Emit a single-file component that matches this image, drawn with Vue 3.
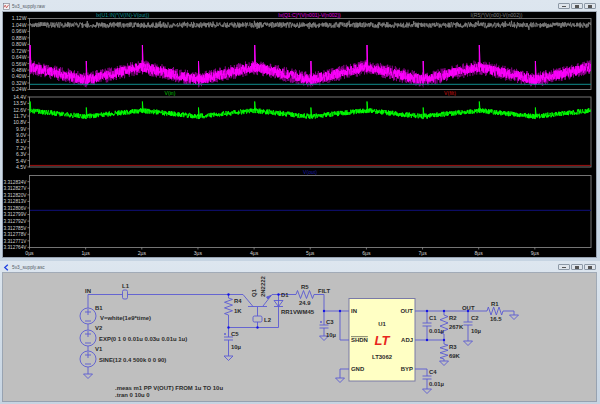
<template>
  <div class="desktop">
    <!-- waveform window -->
    <section class="window plot-window">
      <header class="titlebar">
        <svg class="doc-icon" viewBox="0 0 8 8">
          <rect x="0.5" y="0.5" width="7" height="7" fill="#f4f4f4" stroke="#7a7a8a" stroke-width="0.7" />
          <path d="M1 5 L2.5 2.5 L4 5.5 L6.5 2" fill="none" stroke="#c03030" stroke-width="0.8" />
        </svg>
        <span class="title">5v3_supply.raw</span>
        <div class="win-buttons">
          <span class="win-btn"><i class="min"></i></span>
          <span class="win-btn"><i class="res"></i></span>
          <span class="win-btn"><i class="res"></i></span>
        </div>
      </header>
      <svg class="canvas black" viewBox="3 12 593 245">
        <g v-for="p in panes" :key="p.top">
          <rect class="frame" :x="plotLeft" :y="p.top" :width="plotRight - plotLeft" :height="p.bottom - p.top" />
          <g v-for="t in p.ticks" :key="t.label">
            <line class="tick" :x1="plotLeft - 2" :x2="plotLeft" :y1="t.y" :y2="t.y" />
            <text class="axis" :class="p.cls" :x="plotLeft - 3" :y="t.y + 1.9" text-anchor="end">{{ t.label }}</text>
          </g>
        </g>
        <g v-for="t in timeTicks" :key="t.label">
          <line class="tick" :x1="t.x" :x2="t.x" y1="247.5" y2="249.5" />
          <text class="axis" :x="t.x" y="255" text-anchor="middle">{{ t.label }}</text>
        </g>

        <text class="trace-name teal" x="122.5" y="16.8" text-anchor="middle">Ix(U1:IN)*(V(IN)-V(out))</text>
        <text class="trace-name pink" x="309.5" y="16.8" text-anchor="middle">Ix(Q1:C)*(V(n001)-V(n002))</text>
        <text class="trace-name gray" x="496.5" y="16.8" text-anchor="middle">I(R5)*(V(n00)-V(n002))</text>
        <text class="trace-name green" x="170" y="95" text-anchor="middle">V(in)</text>
        <text class="trace-name red" x="450" y="95" text-anchor="middle">V(filt)</text>
        <text class="trace-name blue" x="310" y="173.6" text-anchor="middle">V(out)</text>

        <path class="trace" stroke="#7c7c7c" :d="grayTrace" />
        <path class="trace thin" stroke="#b400b4" :d="pinkHalo" />
        <path class="trace" stroke="#ff00ff" :d="pinkTrace" />
        <path class="trace flat" stroke="#0f8c8c" d="M30 84.3H591" />
        <path class="trace" stroke="#00ff00" :d="greenTrace" />
        <path class="trace flat" stroke="#a01010" d="M30 165.4H591" />
        <path class="trace flat" stroke="#10107c" d="M30 210.3H591" />
      </svg>
    </section>

    <!-- schematic window -->
    <section class="window sch-window">
      <header class="titlebar">
        <svg class="doc-icon" viewBox="0 0 8 8">
          <path d="M5.5 0.8 L2 4 L5.5 7.2" fill="none" stroke="#2040e0" stroke-width="1.5" />
        </svg>
        <span class="title">5v3_supply.asc</span>
        <div class="win-buttons">
          <span class="win-btn"><i class="min"></i></span>
          <span class="win-btn"><i class="res"></i></span>
          <span class="win-btn"><i class="res"></i></span>
        </div>
      </header>
      <svg class="canvas gray-bg" viewBox="3 272 593 128">
        <rect class="chip" x="349" y="297.5" width="66" height="82.5" />
        <path class="wire" :d="wires" />
        <path class="wire" :d="parts" />
        <path class="wire arrow" d="M268 298 L271 294.5 L266.5 296 Z" />
        <rect class="coil" x="122.5" y="289" width="5" height="9" rx="1.5" />
        <rect class="coil" x="253" y="315" width="9" height="6" rx="1.5" />
        <circle v-for="y in [315, 337, 358]" :key="y" class="wire" cx="88" :cy="y" r="8" />
        <circle v-for="j in junctions" :key="j.join()" class="dot" :cx="j[0]" :cy="j[1]" r="1.2" />
        <text v-for="l in labels" :key="l.t + l.x" class="label" :x="l.x" :y="l.y">{{ l.t }}</text>
        <text class="label" x="351" y="340.5" text-decoration="overline">SHDN</text>
        <text class="label" x="413" y="312" text-anchor="end">OUT</text>
        <text class="label" x="413" y="341" text-anchor="end">ADJ</text>
        <text class="label" x="413" y="370" text-anchor="end">BYP</text>
        <text class="label" x="382" y="325" text-anchor="middle">U1</text>
        <text class="label" x="382" y="358" text-anchor="middle">LT3062</text>
        <text class="logo" x="382" y="343.5" text-anchor="middle">LT</text>
        <text class="label" transform="translate(256 296) rotate(-90)">Q1</text>
        <text class="label" transform="translate(265 296) rotate(-90)">2N2222</text>
      </svg>
    </section>
  </div>
</template>

<script setup>
const plotLeft = 29.5
const plotRight = 591
const usPx = 56.15

const makeTicks = (labels, first, step) =>
  labels.map((label, i) => ({ label, y: first + i * step }))

const panes = [
  {
    top: 18.5,
    bottom: 89.5,
    cls: '',
    ticks: makeTicks(
      ['1.12W', '1.04W', '0.96W', '0.88W', '0.80W', '0.72W', '0.64W', '0.56W', '0.48W', '0.40W', '0.32W', '0.24W'],
      18.5,
      6.45
    )
  },
  {
    top: 97,
    bottom: 167,
    cls: '',
    ticks: makeTicks(
      ['14.4V', '13.5V', '12.6V', '11.7V', '10.8V', '9.9V', '9.0V', '8.1V', '7.2V', '6.3V', '5.4V', '4.5V'],
      97,
      6.36
    )
  },
  {
    top: 175.5,
    bottom: 247.5,
    cls: 'narrow',
    ticks: makeTicks(
      ['3.312834V', '3.312827V', '3.312820V', '3.312813V', '3.312806V', '3.312799V', '3.312792V', '3.312785V', '3.312778V', '3.312771V', '3.312764V'],
      181.7,
      6.57
    )
  }
]

const timeTicks = Array.from({ length: 10 }, (_, i) => ({
  label: i + 'µs',
  x: plotLeft + i * usPx
}))

// small seeded generator so the noise is the same on every load
let seed = 12345
const rnd = () => {
  seed = (seed * 16807) % 2147483647
  return seed / 2147483647 - 0.5
}

const tri = t => Math.abs((t % 2) - 1)

function ripple(low, high, band, evenPeak, oddPeak) {
  let d = ''
  for (let x = plotLeft + 0.5; x <= plotRight - 0.5; x += 0.25) {
    const t = (x - plotLeft) / usPx
    const y = low - (low - high) * tri(t) + rnd() * 2 * band
    d += (d ? 'L' : 'M') + x.toFixed(1) + ' ' + y.toFixed(1)
  }
  for (let i = 0; i <= 9; i++) {
    const x = plotLeft + 0.6 + i * usPx
    const top = i % 2 ? oddPeak : evenPeak
    const base = (i % 2 ? low : high) + band
    d += `M${x.toFixed(1)} ${base}L${x.toFixed(1)} ${top}L${(x + 0.8).toFixed(1)} ${base - band}`
  }
  return d
}

const pinkHalo = ripple(80, 67, 7.5, 45, 61)
const pinkTrace = ripple(80, 67, 5, 45, 61)
const greenTrace = ripple(116.5, 110.5, 2.6, 101.5, 107.5)

let grayPath = ''
for (let x = 30; x <= 591; x += 0.3) {
  const y = 25 + rnd() * 5.5 + (rnd() > 0.44 ? rnd() * 5 : 0)
  grayPath += (grayPath ? 'L' : 'M') + x.toFixed(1) + ' ' + y.toFixed(1)
}
const grayTrace = grayPath

// zigzag resistors, horizontal and vertical
function resV(x, y1, y2) {
  const n = 6
  const s = (y2 - y1) / n
  let d = `M${x} ${y1}`
  for (let i = 0; i < n; i++) d += `L${x + (i % 2 ? -4 : 4)} ${y1 + s * (i + 0.5)}`
  return d + `L${x} ${y2}`
}
function resH(x1, x2, y) {
  const n = 6
  const s = (x2 - x1) / n
  let d = `M${x1} ${y}`
  for (let i = 0; i < n; i++) d += `L${x1 + s * (i + 0.5)} ${y + (i % 2 ? 4 : -4)}`
  return d + `L${x2} ${y}`
}
const gnd = (x, y) => `M${x - 4.5} ${y}H${x + 4.5}L${x} ${y + 4.5}Z`
const cap = (x, y) => `M${x - 4.5} ${y}H${x + 4.5}M${x - 4.5} ${y + 3}H${x + 4.5}`

const wires = [
  'M88 293.5V307M88 323V329M88 345V350M88 366V373',
  'M88 293.5H122.5M127.5 293.5H243',
  'M263 305L272 293.5H296',
  'M278.5 293.5V326.5H228.5',
  'M228.5 293.5V297M228.5 314V336M228.5 339V355',
  'M257.5 306V315M257.5 321V326.5',
  'M314 293.5H324V310H349M340 310V339H349M324 310V324M324 327V335',
  'M415 310H487M503 310H514V314',
  'M427 310V322M427 325V339M415 339H444',
  'M444 310V314M444 333V343M444 358V360',
  'M468 310V321M468 324V340',
  'M415 368H427V375M427 378V388',
  'M349 368H340V377'
].join('')

const parts = [
  resV(228.5, 297, 314),
  resV(444, 314, 333),
  resV(444, 343, 358),
  resH(296, 314, 293.5),
  resH(487, 503, 310),
  cap(228.5, 336),
  cap(324, 324),
  cap(427, 322),
  cap(468, 321),
  cap(427, 375),
  gnd(88, 373),
  gnd(228.5, 355),
  gnd(324, 335),
  gnd(444, 360),
  gnd(468, 340),
  gnd(427, 388),
  gnd(340, 377),
  gnd(514, 314),
  // transistor
  'M248 305.5H267M243 293.5L253 305.5',
  // diode
  'M274 299.5H283L278.5 305.5ZM274 305.5H283',
  // source signs
  'M85 311H91M88 308V314M85 320H91',
  'M85 333H91M88 330V336M85 342H91',
  'M85 354H91M88 351V357M85 363H91',
  // polarity marks
  'M224 333H226M225 332V334M320 321H322M321 320V322'
].join('')

const junctions = [
  [228.5, 293.5],
  [278.5, 293.5],
  [228.5, 326.5],
  [257.5, 326.5],
  [324, 310],
  [340, 310],
  [427, 310],
  [444, 310],
  [468, 310],
  [427, 339],
  [444, 339]
]

const labels = [
  { t: 'IN', x: 85, y: 292 },
  { t: 'L1', x: 122, y: 287 },
  { t: 'B1', x: 95, y: 308.5 },
  { t: 'V=white(1e9*time)', x: 100, y: 318.5 },
  { t: 'V2', x: 95, y: 329 },
  { t: 'EXP(0 1 0 0.01u 0.03u 0.01u 1u)', x: 99, y: 340 },
  { t: 'V1', x: 95, y: 349.5 },
  { t: 'SINE(12 0.4 500k 0 0 90)', x: 99, y: 360.5 },
  { t: '.meas m1 PP V(OUT) FROM 1u TO 10u', x: 115, y: 389 },
  { t: '.tran 0 10u 0', x: 115, y: 396 },
  { t: 'R4', x: 234, y: 302 },
  { t: '1K', x: 234, y: 311.5 },
  { t: 'C5', x: 231, y: 335 },
  { t: '10µ', x: 231, y: 347.5 },
  { t: 'L2', x: 264, y: 320.5 },
  { t: 'D1', x: 281, y: 295.5 },
  { t: 'RR1VWM45', x: 281, y: 312.5 },
  { t: 'R5', x: 301, y: 288 },
  { t: '24.9', x: 299, y: 303.5 },
  { t: 'FILT', x: 318, y: 292 },
  { t: 'C3', x: 326, y: 322.5 },
  { t: '10µ', x: 326, y: 335.5 },
  { t: 'IN', x: 351, y: 312 },
  { t: 'GND', x: 351, y: 370 },
  { t: 'C1', x: 429, y: 318.5 },
  { t: '0.01µ', x: 429, y: 331.5 },
  { t: 'R2', x: 449, y: 318.5 },
  { t: '267K', x: 449, y: 328 },
  { t: 'R3', x: 449, y: 347.5 },
  { t: '69K', x: 449, y: 357 },
  { t: 'OUT', x: 462, y: 308.5 },
  { t: 'C2', x: 471, y: 318.5 },
  { t: '10µ', x: 471, y: 331.5 },
  { t: 'R1', x: 491, y: 304.5 },
  { t: '16.5', x: 490, y: 319.5 },
  { t: 'C4', x: 429, y: 372.5 },
  { t: '0.01µ', x: 429, y: 384.5 }
]
</script>

<style scoped>
.desktop {
  display: flex;
  flex-direction: column;
  width: 600px;
  height: 404px;
  overflow: hidden;
  background: #d5dfe9;
  font-family: "Liberation Sans", Arial, sans-serif;
}

.window {
  display: flex;
  flex-direction: column;
  padding: 0 4px 0 3px;
  background: linear-gradient(#dde6ef, #c6d4e2);
}

.plot-window {
  height: 261px;
}

.sch-window {
  height: 143px;
}

.titlebar {
  display: flex;
  align-items: center;
  gap: 2px;
  height: 12px;
  flex: none;
}

.doc-icon {
  width: 7px;
  height: 7px;
}

.title {
  font-size: 4.8px;
  color: #555c66;
}

.win-buttons {
  display: flex;
  gap: 1px;
  margin-left: auto;
}

.win-btn {
  display: flex;
  align-items: center;
  justify-content: center;
  width: 12px;
  height: 6px;
  background: #dfe5ec;
  border: 1px solid #8d99a6;
  border-radius: 1px;
  box-sizing: border-box;
}

.win-btn i {
  display: block;
  width: 4px;
  background: #555;
}

.win-btn .min {
  height: 1px;
}

.win-btn .res {
  height: 3px;
}

.canvas {
  display: block;
  width: 593px;
  box-shadow: 0 0 0 1px rgba(90, 100, 115, 0.45);
}

.black {
  height: 245px;
  background: #000;
}

.gray-bg {
  height: 128px;
  background: #bfbfbf;
}

.frame {
  fill: none;
  stroke: #808080;
  stroke-width: 0.9;
}

.tick {
  stroke: #a0a0a0;
  stroke-width: 0.7;
}

.axis {
  font-size: 5.1px;
  fill: #cfcfcf;
}

.narrow {
  font-size: 4.75px;
}

.trace-name {
  font-size: 5.1px;
}

.teal { fill: #0f9a9a; }
.pink { fill: #e000e0; }
.gray { fill: #808080; }
.green { fill: #00c800; }
.red { fill: #d01010; }
.blue { fill: #1818a8; }

.trace {
  fill: none;
  stroke-width: 0.9;
}

.thin {
  stroke-width: 0.5;
}

.flat {
  stroke-width: 1;
}

.chip {
  fill: #ffffc4;
  stroke: #7a7aa8;
  stroke-width: 1;
}

.wire {
  fill: none;
  stroke: #5a5ad2;
  stroke-width: 0.9;
}

.arrow {
  fill: #5a5ad2;
}

.coil {
  fill: #bfbfbf;
  stroke: #5a5ad2;
  stroke-width: 0.9;
}

.dot {
  fill: #1414e6;
}

.label {
  font-size: 5.95px;
  font-weight: 700;
  fill: #2a2a2a;
}

.logo {
  font-size: 13px;
  font-weight: 700;
  font-style: italic;
  fill: #e8261c;
}
</style>
